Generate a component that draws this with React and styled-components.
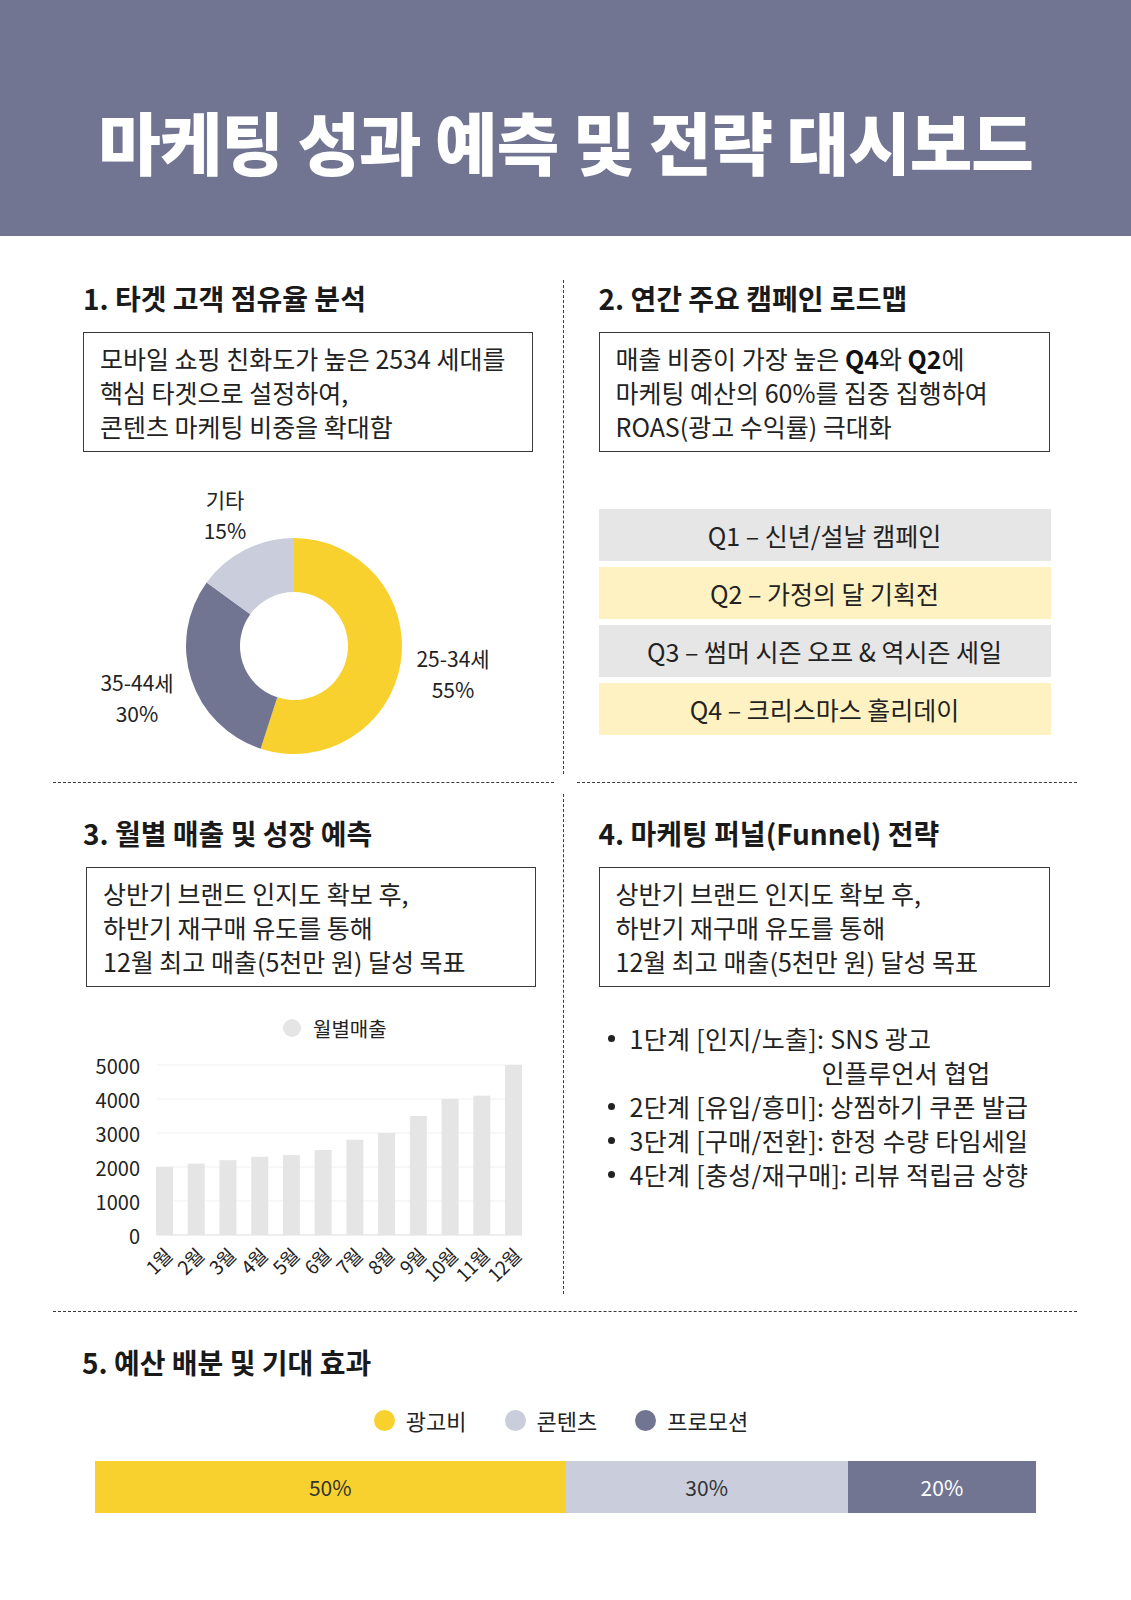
import React from "react";
import styled, { createGlobalStyle } from "styled-components";

const GlobalStyle = createGlobalStyle`
  body {
    margin: 0;
    background: #ffffff;
    font-family: "Noto Sans CJK KR", "Noto Sans", sans-serif;
    color: #222222;
  }
`;

const YELLOW = "#f9d12e";
const LIGHT = "#cacddb";
const PURPLE = "#727592";

const Page = styled.div`
  width: 1131px;
  padding-bottom: 84px;
  background: #ffffff;
`;

const Header = styled.header`
  height: 236px;
  box-sizing: border-box;
  padding-top: 46px;
  background: ${PURPLE};
  display: flex;
  align-items: center;
  justify-content: center;
`;

const HeaderTitle = styled.h1`
  margin: 0;
  color: #ffffff;
  font-size: 68px;
  font-weight: 900;
  letter-spacing: -1px;
  line-height: 1;
`;

const Main = styled.main`
  padding: 0 54px 0 53px;
`;

const Row = styled.div`
  display: grid;
  grid-template-columns: 1fr 23px 1fr;
  margin-top: ${({ $mt }) => $mt}px;
`;

const VDivider = styled.div`
  margin-left: 9px;
  border-left: 1px dashed #3a3a3a;
`;

const HRule = styled.div`
  border-top: 1px dashed #3a3a3a;
`;

const HRow = styled.div`
  display: grid;
  grid-template-columns: 1fr 23px 1fr;
  margin-top: ${({ $mt }) => $mt}px;
`;

const Section = styled.section`
  padding-left: ${({ $pl }) => $pl}px;
  padding-top: ${({ $pt = 0 }) => $pt}px;
`;

const SectionTitle = styled.h2`
  margin: 0;
  font-size: 28px;
  line-height: 36px;
  font-weight: 700;
  letter-spacing: 0;
  color: #1a1a1a;
`;

const NoteBox = styled.div`
  width: ${({ $w }) => $w}px;
  box-sizing: border-box;
  margin-top: 16px;
  margin-left: ${({ $ml = 0 }) => $ml}px;
  padding: 8px 10px 8px 16px;
  border: 1.5px solid #3a3a3a;
  font-size: 25px;
  line-height: 34px;
  letter-spacing: 0;
  white-space: nowrap;
  color: #222222;

  b {
    font-weight: 700;
    color: #111111;
  }
`;

const ChartSvg = styled.svg`
  display: block;
  margin-top: ${({ $mt = 17 }) => $mt}px;
  font-family: "Noto Sans CJK KR", "Noto Sans", sans-serif;
  fill: #222222;
`;

const Roadmap = styled.div`
  width: 452px;
  margin-top: 57px;
  display: flex;
  flex-direction: column;
  gap: 6px;
`;

const RoadmapItem = styled.div`
  height: 52px;
  display: flex;
  align-items: center;
  justify-content: center;
  background: ${({ $tone }) => ($tone === "yellow" ? "#fff2c2" : "#e6e6e6")};
  font-size: 25px;
  letter-spacing: 0;
  color: #222222;
`;

const FunnelList = styled.ul`
  list-style: none;
  margin: 34px 0 0;
  padding: 0 0 0 9px;
  font-size: 25px;
  line-height: 34px;
  letter-spacing: 0.3px;
  color: #222222;
`;

const FunnelItem = styled.li`
  display: flex;
  align-items: flex-start;
`;

const Dot = styled.span`
  flex: none;
  width: 7px;
  height: 7px;
  margin: 14px 15px 0 0;
  border-radius: 50%;
  background: #222222;
`;

const Continued = styled.span`
  display: block;
  padding-left: 192px;
`;

const Budget = styled.section`
  padding-top: 32px;
`;

const BudgetTitle = styled(SectionTitle)`
  padding-left: 29px;
`;

const Legend = styled.div`
  margin: 25px 44px 0 36px;
  display: flex;
  justify-content: center;
  gap: 38px;
  font-size: 22px;
  line-height: 30px;
  letter-spacing: 0;
`;

const LegendItem = styled.div`
  display: flex;
  align-items: center;
  gap: 11px;
`;

const LegendDot = styled.span`
  width: 21px;
  height: 21px;
  border-radius: 50%;
  background: ${({ $color }) => $color};
`;

const StackBar = styled.div`
  margin: 26px 41px 0 42px;
  height: 52px;
  display: flex;
`;

const StackSeg = styled.div`
  flex: ${({ $share }) => $share};
  display: flex;
  align-items: center;
  justify-content: center;
  background: ${({ $color }) => $color};
  color: ${({ $text }) => $text};
  font-size: 21px;
`;

const polar = (cx, cy, r, deg) => {
  const a = (deg * Math.PI) / 180;
  return [cx + r * Math.sin(a), cy - r * Math.cos(a)];
};

const ringSlice = (cx, cy, R, r, a0, a1) => {
  const large = a1 - a0 > 180 ? 1 : 0;
  const [x0, y0] = polar(cx, cy, R, a0);
  const [x1, y1] = polar(cx, cy, R, a1);
  const [x2, y2] = polar(cx, cy, r, a1);
  const [x3, y3] = polar(cx, cy, r, a0);
  return `M${x0} ${y0} A${R} ${R} 0 ${large} 1 ${x1} ${y1} L${x2} ${y2} A${r} ${r} 0 ${large} 0 ${x3} ${y3} Z`;
};

const slices = [
  { from: 0, to: 198, color: YELLOW },
  { from: 198, to: 306, color: PURPLE },
  { from: 306, to: 360, color: LIGHT },
];

// label centre of the first line; second line sits one step below
const donutLabels = [
  { x: 142, name: "기타", pct: "15%", y: 30 },
  { x: 370, name: "25-34세", pct: "55%", y: 189 },
  { x: 54, name: "35-44세", pct: "30%", y: 213 },
];

const Donut = () => (
  <ChartSvg width="450" height="305" viewBox="0 0 450 305">
    {slices.map((s) => (
      <path key={s.from} d={ringSlice(211, 177, 108, 54, s.from, s.to)} fill={s.color} />
    ))}
    {donutLabels.map((l) => (
      <g key={l.name}>
        <text x={l.x} y={l.y} fontSize="21" textAnchor="middle" dominantBaseline="central">
          {l.name}
        </text>
        <text x={l.x} y={l.y + 31} fontSize="21" textAnchor="middle" dominantBaseline="central">
          {l.pct}
        </text>
      </g>
    ))}
  </ChartSvg>
);

const sales = [2000, 2100, 2200, 2300, 2350, 2500, 2800, 3000, 3500, 4000, 4100, 5000];
const yOf = (v) => 230 - v * 0.034;

const SalesChart = () => (
  <ChartSvg width="450" height="289" viewBox="0 0 450 289" $mt={18}>
    <circle cx="209" cy="23" r="9" fill="#e5e5e5" />
    <text x="230" y="23" fontSize="20" dominantBaseline="central">
      월별매출
    </text>
    {[0, 1000, 2000, 3000, 4000, 5000].map((v) => (
      <g key={v}>
        <line x1="74" x2="439" y1={yOf(v)} y2={yOf(v)} stroke={v === 0 ? "#dddddd" : "#efefef"} />
        <text x="57" y={yOf(v)} fontSize="20" textAnchor="end" dominantBaseline="central">
          {v}
        </text>
      </g>
    ))}
    {sales.map((v, i) => {
      const cx = 81.5 + i * 31.73;
      return (
        <g key={i}>
          <rect x={cx - 8.5} y={yOf(v)} width="17" height={v * 0.034} fill="#e5e5e5" />
          <text
            x={cx + 9}
            y={252}
            fontSize="19"
            letterSpacing="-0.5"
            textAnchor="end"
            transform={`rotate(-45 ${cx + 9} 252)`}
          >
            {i + 1}월
          </text>
        </g>
      );
    })}
  </ChartSvg>
);

const roadmap = [
  { label: "Q1 – 신년/설날 캠페인", tone: "gray" },
  { label: "Q2 – 가정의 달 기획전", tone: "yellow" },
  { label: "Q3 – 썸머 시즌 오프 & 역시즌 세일", tone: "gray" },
  { label: "Q4 – 크리스마스 홀리데이", tone: "yellow" },
];

const budget = [
  { name: "광고비", share: 50, color: YELLOW, text: "#333333" },
  { name: "콘텐츠", share: 30, color: LIGHT, text: "#333333" },
  { name: "프로모션", share: 20, color: PURPLE, text: "#ffffff" },
];

const App = () => {
  return (
    <Page>
      <GlobalStyle />
      <Header>
        <HeaderTitle>마케팅 성과 예측 및 전략 대시보드</HeaderTitle>
      </Header>

      <Main>
        <Row $mt={44}>
          <Section $pl={30}>
            <SectionTitle>1. 타겟 고객 점유율 분석</SectionTitle>
            <NoteBox $w={450}>
              모바일 쇼핑 친화도가 높은 2534 세대를
              <br />
              핵심 타겟으로 설정하여,
              <br />
              콘텐츠 마케팅 비중을 확대함
            </NoteBox>
            <Donut />
          </Section>
          <VDivider />
          <Section $pl={22}>
            <SectionTitle>2. 연간 주요 캠페인 로드맵</SectionTitle>
            <NoteBox $w={451}>
              매출 비중이 가장 높은 <b>Q4</b>와 <b>Q2</b>에
              <br />
              마케팅 예산의 60%를 집중 집행하여
              <br />
              ROAS(광고 수익률) 극대화
            </NoteBox>
            <Roadmap>
              {roadmap.map((r) => (
                <RoadmapItem key={r.label} $tone={r.tone}>
                  {r.label}
                </RoadmapItem>
              ))}
            </Roadmap>
          </Section>
        </Row>

        <HRow $mt={8}>
          <HRule />
          <div />
          <HRule />
        </HRow>

        <Row $mt={11}>
          <Section $pl={30} $pt={21}>
            <SectionTitle>3. 월별 매출 및 성장 예측</SectionTitle>
            <NoteBox $w={450} $ml={3}>
              상반기 브랜드 인지도 확보 후,
              <br />
              하반기 재구매 유도를 통해
              <br />
              12월 최고 매출(5천만 원) 달성 목표
            </NoteBox>
            <SalesChart />
          </Section>
          <VDivider />
          <Section $pl={22} $pt={21}>
            <SectionTitle>4. 마케팅 퍼널(Funnel) 전략</SectionTitle>
            <NoteBox $w={451}>
              상반기 브랜드 인지도 확보 후,
              <br />
              하반기 재구매 유도를 통해
              <br />
              12월 최고 매출(5천만 원) 달성 목표
            </NoteBox>
            <FunnelList>
              <FunnelItem>
                <Dot />
                <span>
                  1단계 [인지/노출]: SNS 광고
                  <Continued>인플루언서 협업</Continued>
                </span>
              </FunnelItem>
              <FunnelItem>
                <Dot />
                <span>2단계 [유입/흥미]: 상찜하기 쿠폰 발급</span>
              </FunnelItem>
              <FunnelItem>
                <Dot />
                <span>3단계 [구매/전환]: 한정 수량 타임세일</span>
              </FunnelItem>
              <FunnelItem>
                <Dot />
                <span>4단계 [충성/재구매]: 리뷰 적립금 상향</span>
              </FunnelItem>
            </FunnelList>
          </Section>
        </Row>

        <HRule style={{ marginTop: 17 }} />

        <Budget>
          <BudgetTitle>5. 예산 배분 및 기대 효과</BudgetTitle>
          <Legend>
            {budget.map((b) => (
              <LegendItem key={b.name}>
                <LegendDot $color={b.color} />
                {b.name}
              </LegendItem>
            ))}
          </Legend>
          <StackBar>
            {budget.map((b) => (
              <StackSeg key={b.name} $share={b.share} $color={b.color} $text={b.text}>
                {b.share}%
              </StackSeg>
            ))}
          </StackBar>
        </Budget>
      </Main>
    </Page>
  );
};

export default App;
